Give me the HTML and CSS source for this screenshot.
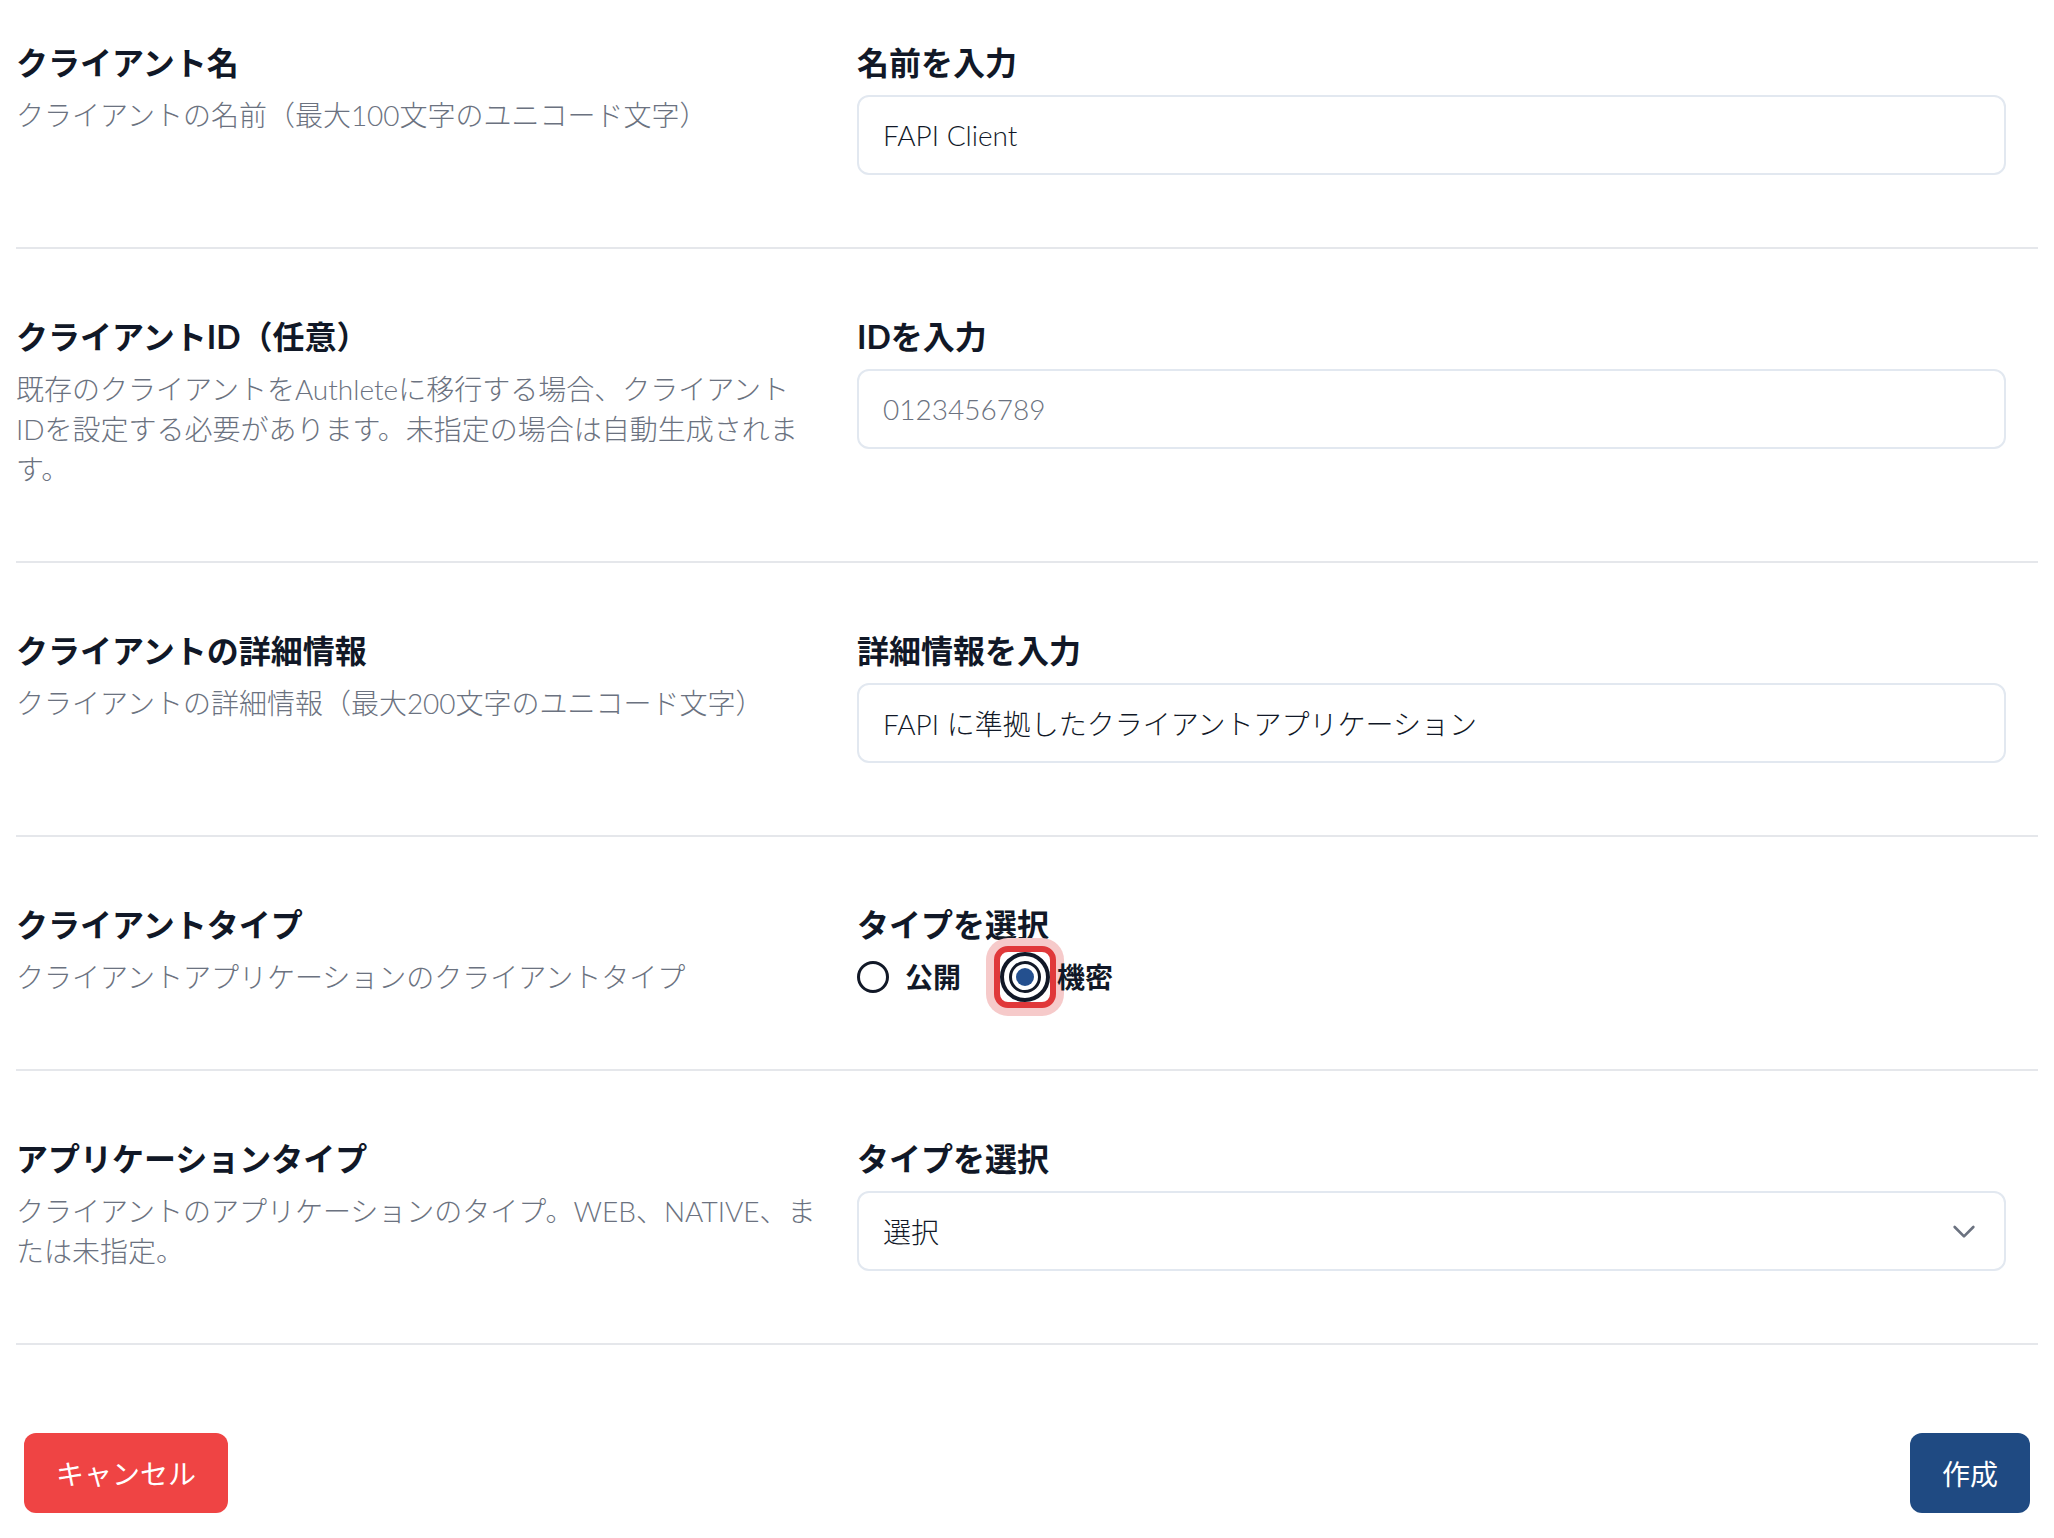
FILE: index.html
```html
<!DOCTYPE html>
<html lang="ja">
<head>
<meta charset="utf-8">
<title>クライアント作成</title>
<link rel="stylesheet" href="styles.css">
</head>
<body>
<main class="page">
  <section class="row row-first">
    <div class="info">
      <h2 class="title">クライアント名</h2>
      <p class="desc">クライアントの名前（最大100文字のユニコード文字）</p>
    </div>
    <div class="field">
      <label class="label">名前を入力</label>
      <input class="text-input" type="text" value="FAPI Client">
    </div>
  </section>

  <section class="row">
    <div class="info">
      <h2 class="title">クライアントID（任意）</h2>
      <p class="desc">既存のクライアントをAuthleteに移行する場合、クライアント<br>IDを設定する必要があります。未指定の場合は自動生成されま<br>す。</p>
    </div>
    <div class="field">
      <label class="label">IDを入力</label>
      <input class="text-input" type="text" placeholder="0123456789">
    </div>
  </section>

  <section class="row">
    <div class="info">
      <h2 class="title">クライアントの詳細情報</h2>
      <p class="desc">クライアントの詳細情報（最大200文字のユニコード文字）</p>
    </div>
    <div class="field">
      <label class="label">詳細情報を入力</label>
      <input class="text-input" type="text" value="FAPI に準拠したクライアントアプリケーション">
    </div>
  </section>

  <section class="row">
    <div class="info">
      <h2 class="title">クライアントタイプ</h2>
      <p class="desc">クライアントアプリケーションのクライアントタイプ</p>
    </div>
    <div class="field">
      <label class="label">タイプを選択</label>
      <div class="radio-group">
        <div class="radio-option">
          <span class="radio"></span>
          <span class="radio-label">公開</span>
        </div>
        <div class="radio-option">
          <span class="radio radio-checked">
            <span class="focus-box"><span class="outer-ring"></span></span>
            <span class="dot"></span>
          </span>
          <span class="radio-label">機密</span>
        </div>
      </div>
    </div>
  </section>

  <section class="row">
    <div class="info">
      <h2 class="title">アプリケーションタイプ</h2>
      <p class="desc">クライアントのアプリケーションのタイプ。WEB、NATIVE、ま<br>たは未指定。</p>
    </div>
    <div class="field">
      <label class="label">タイプを選択</label>
      <div class="select">
        <span class="select-value">選択</span>
        <svg class="chevron" viewBox="0 0 24 24" fill="none" stroke="currentColor" stroke-width="2" stroke-linecap="round" stroke-linejoin="round"><path d="M19 9l-7 7-7-7"/></svg>
      </div>
    </div>
  </section>

  <footer class="actions">
    <button class="btn btn-cancel" type="button">キャンセル</button>
    <button class="btn btn-create" type="button">作成</button>
  </footer>
</main>
</body>
</html>
```
FILE: styles.css
```css
* { box-sizing: border-box; }

html, body {
  margin: 0;
  padding: 0;
  background: #ffffff;
}

body {
  font-family: "Lato", "Noto Sans CJK JP", sans-serif;
  color: #111827;
}

.page {
  width: 2054px;
  padding: 0 16px;
}

.row {
  display: grid;
  grid-template-columns: 809px 1fr;
  column-gap: 32px;
  padding: 64px 32px 72px 0;
  border-bottom: 2px solid #e5e7eb;
}

.row-first {
  padding-top: 39px;
}

.info, .field {
  display: flex;
  flex-direction: column;
}

.title, .label {
  margin: 0;
  font-size: 32px;
  line-height: 48px;
  font-weight: 700;
  color: #111827;
}

.desc {
  margin: 8px 0 0;
  font-size: 28px;
  line-height: 40px;
  font-weight: 300;
  color: #6b7280;
}

.text-input {
  margin-top: 8px;
  width: 100%;
  height: 80px;
  border: 2px solid #e2e8f0;
  border-radius: 12px;
  padding: 0 24px;
  font-family: "Lato", "Noto Sans CJK JP", sans-serif;
  font-size: 28px;
  font-weight: 300;
  color: #111827;
  background: #ffffff;
  outline: none;
}

.text-input::placeholder {
  color: #6b7280;
}

.radio-group {
  margin-top: 8px;
  display: flex;
  align-items: center;
  gap: 48px;
  height: 40px;
}

.radio-option {
  display: flex;
  align-items: center;
  gap: 16px;
}

.radio {
  width: 32px;
  height: 32px;
  border: 3px solid #111827;
  border-radius: 50%;
  flex: none;
}

.radio-checked {
  position: relative;
  display: flex;
  align-items: center;
  justify-content: center;
  background: #ffffff;
}

.focus-box {
  position: absolute;
  left: 50%;
  top: 50%;
  width: 62px;
  height: 62px;
  margin: -31px 0 0 -31px;
  border: 6px solid #e0383a;
  border-radius: 14px;
  background: #ffffff;
  box-shadow: 0 0 0 8px #f6caca;
  display: flex;
  align-items: center;
  justify-content: center;
  z-index: 0;
}

.outer-ring {
  width: 50px;
  height: 50px;
  border: 4px solid #111827;
  border-radius: 50%;
}

.radio-checked::before {
  content: "";
  position: absolute;
  inset: -3px;
  border: 3px solid #111827;
  border-radius: 50%;
  z-index: 1;
}

.dot {
  position: relative;
  z-index: 2;
  width: 18px;
  height: 18px;
  border-radius: 50%;
  background: #24508f;
}

.radio-label {
  font-size: 28px;
  line-height: 40px;
  font-weight: 700;
  color: #111827;
  position: relative;
  z-index: 3;
}

.select {
  margin-top: 8px;
  height: 80px;
  border: 2px solid #e2e8f0;
  border-radius: 12px;
  padding: 0 24px 0 24px;
  display: flex;
  align-items: center;
  justify-content: space-between;
  background: #ffffff;
}

.select-value {
  font-size: 28px;
  font-weight: 300;
  color: #111827;
}

.chevron {
  width: 32px;
  height: 32px;
  color: #6b7280;
  flex: none;
}

.actions {
  display: flex;
  justify-content: space-between;
  padding: 88px 8px 24px;
}

.btn {
  height: 80px;
  padding: 0 32px;
  border: none;
  border-radius: 12px;
  font-family: "Lato", "Noto Sans CJK JP", sans-serif;
  font-size: 28px;
  color: #ffffff;
  cursor: pointer;
}

.btn-cancel {
  background: #ef4444;
}

.btn-create {
  background: #1f4a82;
}
```
